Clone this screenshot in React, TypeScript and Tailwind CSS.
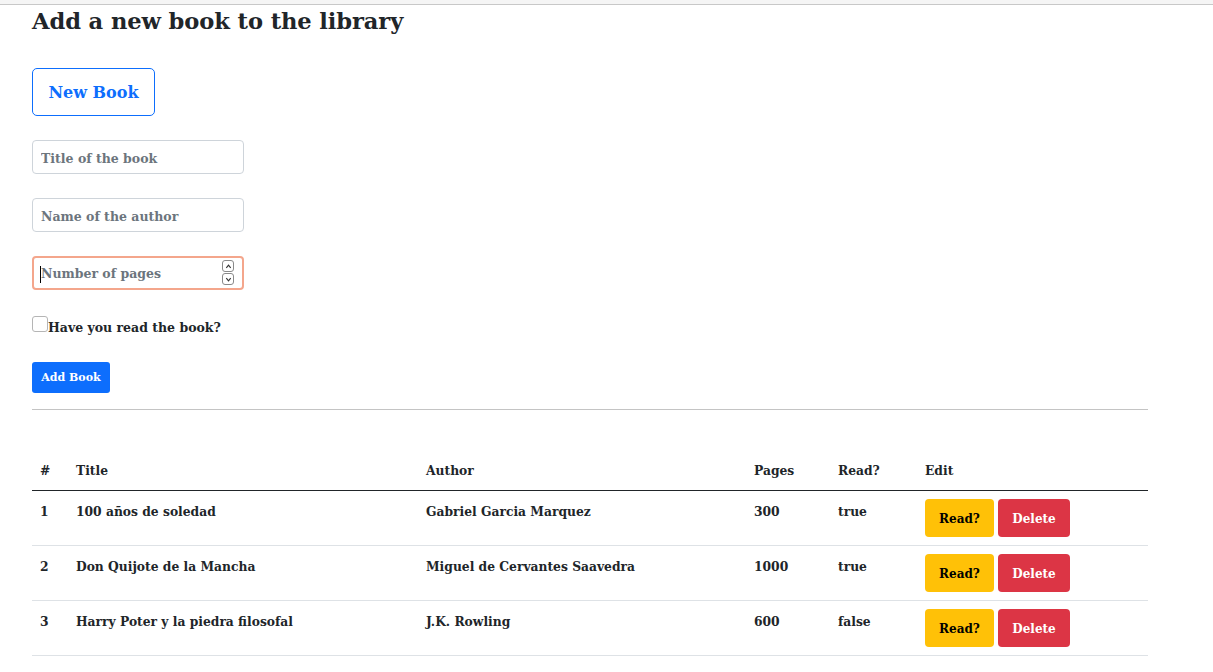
import { useState } from "react";

type Book = {
  id: number;
  title: string;
  author: string;
  pages: number;
  read: boolean;
};

const initialBooks: Book[] = [
  { id: 1, title: "100 años de soledad", author: "Gabriel Garcia Marquez", pages: 300, read: true },
  { id: 2, title: "Don Quijote de la Mancha", author: "Miguel de Cervantes Saavedra", pages: 1000, read: true },
  { id: 3, title: "Harry Poter y la piedra filosofal", author: "J.K. Rowling", pages: 600, read: false },
];

const font = "font-['DejaVu_Serif',serif]";

export default function App() {
  const [books, setBooks] = useState<Book[]>(initialBooks);

  const toggleRead = (id: number) =>
    setBooks((bs) => bs.map((b) => (b.id === id ? { ...b, read: !b.read } : b)));

  const remove = (id: number) => setBooks((bs) => bs.filter((b) => b.id !== id));

  return (
    <div className={`min-h-[672px] bg-white text-[#212529] font-bold ${font}`}>
      {/* browser strip */}
      <div className="h-[5px] bg-[#f5f5f5] border-b border-[#c8c8c8]" />

      <div className="w-[1116px] ml-8">
        <h1 className="text-[22.6px] leading-[34px] -mt-[1px] tracking-[-0.1px]">
          Add a new book to the library
        </h1>

        <button
          type="button"
          className="mt-[30px] h-[48px] w-[123px] rounded-[5px] border border-[#0d6efd] text-[#0d6efd] text-[16px] pt-[2px]"
        >
          New Book
        </button>

        <form className="flex flex-col mt-[24px]" onSubmit={(e) => e.preventDefault()}>
          <input
            placeholder="Title of the book"
            className="h-[34px] w-[212px] rounded-[4px] border border-[#ced4da] px-2 pt-[2px] text-[12.5px] placeholder:text-[#6c757d] outline-none"
          />
          <input
            placeholder="Name of the author"
            className="mt-[24px] h-[34px] w-[212px] rounded-[4px] border border-[#ced4da] px-2 pt-[2px] text-[12.5px] placeholder:text-[#6c757d] outline-none"
          />
          <div className="mt-[24px] relative h-[34px] w-[212px] rounded-[4px] border-2 border-[#f4a68c] flex items-center pt-[2px]">
            <span className="ml-[6px] w-[1px] h-[17px] bg-black" />
            <span className="text-[12.5px] text-[#6c757d]">Number of pages</span>
            <span className="absolute right-[8px] top-[2px] flex flex-col gap-[1px]">
              <span className="w-[12px] h-[12px] border border-[#8a8a8a] rounded-[3px] flex items-center justify-center">
                <svg viewBox="0 0 8 8" className="w-[7px] h-[7px]" fill="none" stroke="#333" strokeWidth="1.3">
                  <path d="M1.5 5.5 L4 2.5 L6.5 5.5" />
                </svg>
              </span>
              <span className="w-[12px] h-[12px] border border-[#8a8a8a] rounded-[3px] flex items-center justify-center">
                <svg viewBox="0 0 8 8" className="w-[7px] h-[7px]" fill="none" stroke="#333" strokeWidth="1.3">
                  <path d="M1.5 2.5 L4 5.5 L6.5 2.5" />
                </svg>
              </span>
            </span>
          </div>

          <label className="mt-[26px] flex items-end text-[12.5px]">
            <span className="w-[16px] h-[16px] border border-[#b5b5b5] rounded-[3px] bg-white" />
            <span className="leading-[14px] -mb-[3px]">Have you read the book?</span>
          </label>

          <button
            type="submit"
            className="mt-[30px] h-[31px] w-[78px] rounded-[3px] bg-[#0d6efd] text-white text-[11px] pt-[1px]"
          >
            Add Book
          </button>
        </form>

        <hr className="mt-[16px] border-0 border-t border-[#c4c4c4]" />

        <table className="mt-[45px] w-full text-[12.3px] text-left">
          <thead>
            <tr className="border-b border-[#212529] h-[35px]">
              <th className="pl-2 w-[44px] pb-[2px]">#</th>
              <th className="w-[350px] pb-[2px]">Title</th>
              <th className="w-[328px] pb-[2px]">Author</th>
              <th className="w-[84px] pb-[2px]">Pages</th>
              <th className="w-[87px] pb-[2px]">Read?</th>
              <th className="pb-[2px]">Edit</th>
            </tr>
          </thead>
          <tbody>
            {books.map((b) => (
              <tr key={b.id} className="border-b border-[#dee2e6] h-[55px] align-top">
                <td className="pl-2 pt-[12px]">{b.id}</td>
                <td className="pt-[12px]">{b.title}</td>
                <td className="pt-[12px]">{b.author}</td>
                <td className="pt-[12px]">{b.pages}</td>
                <td className="pt-[12px]">{String(b.read)}</td>
                <td className="pt-[8px]">
                  <div className="flex gap-[4px]">
                    <button
                      type="button"
                      onClick={() => toggleRead(b.id)}
                      className="h-[38px] w-[69px] rounded-[4px] bg-[#ffc107] text-black text-[12px] pt-[2px]"
                    >
                      Read?
                    </button>
                    <button
                      type="button"
                      onClick={() => remove(b.id)}
                      className="h-[38px] w-[72px] rounded-[4px] bg-[#dc3545] text-white text-[12px] pt-[2px]"
                    >
                      Delete
                    </button>
                  </div>
                </td>
              </tr>
            ))}
          </tbody>
        </table>
      </div>
    </div>
  );
}
